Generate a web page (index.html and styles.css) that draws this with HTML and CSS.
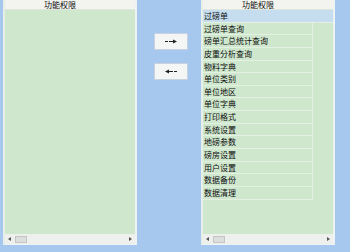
FILE: index.html
```html
<!DOCTYPE html>
<html lang="zh">

<head>
    <meta charset="utf-8">
    <title>功能权限</title>
    <link rel="stylesheet" href="styles.css">
</head>

<body>

    <main class="wrap">
        <section class="panel">
            <div class="head"><span class="headCol">功能权限</span></div>
            <div class="list"></div>
            <div class="hscroll">
                <span class="arrow arrowLeft"></span>
                <span class="thumb"></span>
                <span class="track"></span>
                <span class="arrow arrowRight"></span>
            </div>
        </section>

        <section class="mid">
            <button class="knap">
                <svg width="12" height="5" viewBox="0 0 12 5">
                    <path d="M0 2.5H3M4 2.5H8" stroke="#222" stroke-width="1"/>
                    <path d="M8 0.5L12 2.5L8 4.5Z" fill="#222"/>
                </svg>
            </button>
            <button class="knap">
                <svg width="12" height="5" viewBox="0 0 12 5">
                    <path d="M4 2.5H8M9 2.5H12" stroke="#222" stroke-width="1"/>
                    <path d="M4 0.5L0 2.5L4 4.5Z" fill="#222"/>
                </svg>
            </button>
        </section>

        <section class="panel">
            <div class="head"><span class="headCol">功能权限</span></div>
            <div class="list">
                <div class="row valgt">过磅单</div>
                <div class="row">过磅单查询</div>
                <div class="row">磅单汇总统计查询</div>
                <div class="row">皮重分析查询</div>
                <div class="row">物料字典</div>
                <div class="row">单位类别</div>
                <div class="row">单位地区</div>
                <div class="row">单位字典</div>
                <div class="row">打印格式</div>
                <div class="row">系统设置</div>
                <div class="row">地磅参数</div>
                <div class="row">磅房设置</div>
                <div class="row">用户设置</div>
                <div class="row">数据备份</div>
                <div class="row">数据清理</div>
            </div>
            <div class="hscroll">
                <span class="arrow arrowLeft"></span>
                <span class="thumb"></span>
                <span class="track"></span>
                <span class="arrow arrowRight"></span>
            </div>
        </section>
    </main>

</body>

</html>
```

FILE: styles.css
```css
html {
    margin: 0;
}

body {
    margin: 0;
    width: 350px;
    height: 252px;
    overflow: hidden;
    background-color: #a7c8ee;
    font-family: "Noto Sans CJK SC", "Liberation Sans", sans-serif;
    color: #0d0d0d;
}

.wrap {
    display: flex;
    padding-left: 3px;
    height: 245px;
}

.panel {
    width: 130px;
    display: flex;
    flex-direction: column;
    border-left: 2px solid #e6efe8;
    border-right: 2px solid #eef2f2;
    border-bottom: 1px solid #eef2f2;
    background-color: #cfe7cd;
}

.head {
    height: 9px;
    overflow: hidden;
    background-color: #f3f4f0;
    border-bottom: 1px solid #dfe6dc;
}

.headCol {
    display: block;
    width: 110px;
    text-align: center;
    font-size: 8px;
    line-height: 9px;
}

.list {
    flex: 1;
}

.row {
    box-sizing: border-box;
    width: 110px;
    height: 12.65px;
    line-height: 12px;
    font-size: 8px;
    padding-left: 1px;
    border-right: 1px solid #e4f0e2;
    border-bottom: 1px solid #e4f0e2;
    white-space: nowrap;
}

.valgt {
    width: 130px;
    background-color: #c6ddef;
    border-right: none;
}

.hscroll {
    height: 10px;
    display: flex;
    align-items: center;
    background-color: #eef0ee;
    padding: 0 3px;
}

.arrow {
    width: 0;
    height: 0;
    border-top: 2px solid transparent;
    border-bottom: 2px solid transparent;
}

.arrowLeft {
    border-right: 3px solid #555;
}

.arrowRight {
    border-left: 3px solid #555;
}

.thumb {
    width: 12px;
    height: 7px;
    margin-left: 4px;
    background-color: #dcdedd;
    border: 1px solid #c4c6c5;
    box-sizing: border-box;
}

.track {
    flex: 1;
}

.mid {
    width: 64px;
    display: flex;
    flex-direction: column;
    align-items: center;
    gap: 13px;
    padding-top: 33px;
}

.knap {
    width: 34px;
    height: 17px;
    padding: 0;
    margin-left: 3px;
    display: flex;
    align-items: center;
    justify-content: center;
    background-color: #f4f5f5;
    border: 1px solid #c9d2de;
    border-radius: 1px;
}
```
